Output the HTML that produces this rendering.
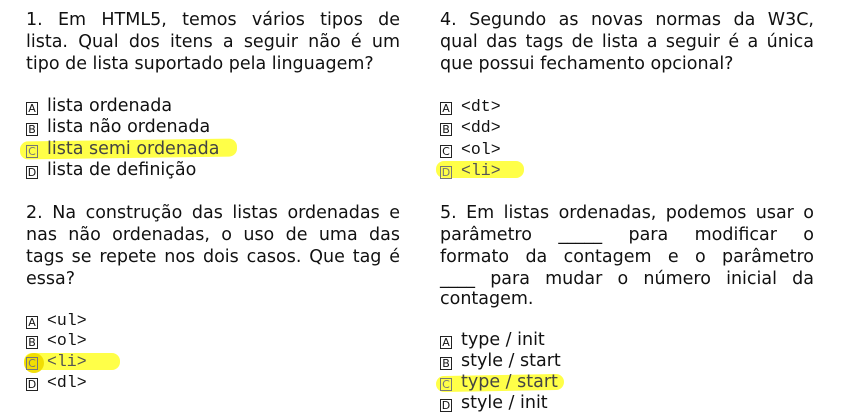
<!DOCTYPE html>
<html><head><meta charset="utf-8">
<style>
html,body{margin:0;padding:0;background:#fff;}
body{width:846px;height:411px;position:relative;overflow:hidden;font-family:"DejaVu Sans","Liberation Sans",sans-serif;font-size:17.5px;color:#111;}
.l{position:absolute;height:22px;line-height:22px;white-space:nowrap;z-index:2;}
.j{width:374px;text-align:justify;text-align-last:justify;white-space:normal;}
.b{display:inline-block;width:10px;height:11px;border:1px solid #222;font-size:11px;line-height:11px;text-align:center;vertical-align:-1px;margin-right:9px;font-family:"DejaVu Sans",sans-serif;}
.m{font-family:"Liberation Mono","DejaVu Sans Mono",monospace;font-size:16.5px;}
.h{position:absolute;background:rgba(255,255,40,0.85);z-index:1;border-radius:8px;}
</style></head><body>
<div class="h" style="left:20px;top:140px;width:217px;height:18px;transform:rotate(-0.8deg)"></div>
<div class="h" style="left:436px;top:161px;width:88px;height:17px"></div>
<div class="h" style="left:24px;top:353px;width:96px;height:17px"></div>
<div class="h" style="left:24px;top:353px;width:20px;height:20px;border-radius:50%;background:rgba(240,220,0,0.95)"></div>
<div class="h" style="left:436px;top:375px;width:128px;height:16px;transform:rotate(-1deg)"></div>

<div class="l j" style="left:26px;top:9px">1. Em HTML5, temos vários tipos de</div>
<div class="l j" style="left:26px;top:31px">lista. Qual dos itens a seguir não é um</div>
<div class="l" style="left:26px;top:53px">tipo de lista suportado pela linguagem?</div>
<div class="l" style="left:26px;top:95px"><span class="b">A</span>lista ordenada</div>
<div class="l" style="left:26px;top:116px"><span class="b">B</span>lista não ordenada</div>
<div class="l" style="left:26px;top:138px;color:#444"><span class="b" style="border-color:#777;color:#777">C</span>lista semi ordenada</div>
<div class="l" style="left:26px;top:159px"><span class="b">D</span>lista de definição</div>

<div class="l j" style="left:26px;top:202px">2. Na construção das listas ordenadas e</div>
<div class="l j" style="left:26px;top:224px">nas não ordenadas, o uso de uma das</div>
<div class="l j" style="left:26px;top:246px">tags se repete nos dois casos. Que tag é</div>
<div class="l" style="left:26px;top:268px">essa?</div>
<div class="l" style="left:26px;top:309px"><span class="b">A</span><span class="m">&lt;ul&gt;</span></div>
<div class="l" style="left:26px;top:329px"><span class="b">B</span><span class="m">&lt;ol&gt;</span></div>
<div class="l" style="left:26px;top:350px;color:#555"><span class="b" style="border-color:#777;color:#777">C</span><span class="m">&lt;li&gt;</span></div>
<div class="l" style="left:26px;top:371px"><span class="b">D</span><span class="m">&lt;dl&gt;</span></div>

<div class="l j" style="left:440px;top:9px">4. Segundo as novas normas da W3C,</div>
<div class="l j" style="left:440px;top:31px">qual das tags de lista a seguir é a única</div>
<div class="l" style="left:440px;top:53px">que possui fechamento opcional?</div>
<div class="l" style="left:440px;top:95px"><span class="b">A</span><span class="m">&lt;dt&gt;</span></div>
<div class="l" style="left:440px;top:116px"><span class="b">B</span><span class="m">&lt;dd&gt;</span></div>
<div class="l" style="left:440px;top:138px"><span class="b">C</span><span class="m">&lt;ol&gt;</span></div>
<div class="l" style="left:440px;top:159px;color:#555"><span class="b" style="border-color:#777;color:#777">D</span><span class="m">&lt;li&gt;</span></div>

<div class="l j" style="left:440px;top:202px">5. Em listas ordenadas, podemos usar o</div>
<div class="l j" style="left:440px;top:224px">parâmetro _____ para modificar o</div>
<div class="l j" style="left:440px;top:246px">formato da contagem e o parâmetro</div>
<div class="l j" style="left:440px;top:268px">____ para mudar o número inicial da</div>
<div class="l" style="left:440px;top:288px">contagem.</div>
<div class="l" style="left:440px;top:329px"><span class="b">A</span>type / init</div>
<div class="l" style="left:440px;top:350px"><span class="b">B</span>style / start</div>
<div class="l" style="left:440px;top:371px;color:#444"><span class="b" style="border-color:#777;color:#777">C</span>type / start</div>
<div class="l" style="left:440px;top:392px"><span class="b">D</span>style / init</div>
</body></html>
